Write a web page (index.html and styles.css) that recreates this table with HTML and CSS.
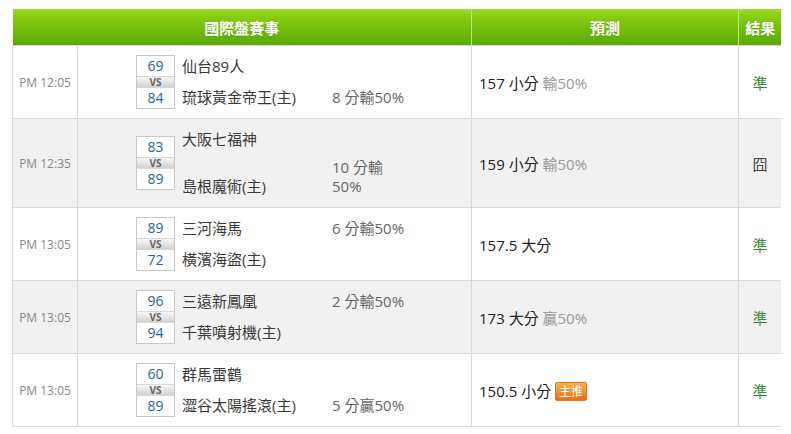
FILE: index.html
```html
<!DOCTYPE html>
<html lang="zh-Hant">
<head>
    <meta charset="UTF-8">
    <title>國際盤賽事</title>
    <link rel="stylesheet" href="styles.css">
</head>
<body>

    <table class="games">
        <colgroup>
            <col class="c-time">
            <col class="c-match">
            <col class="c-pred">
            <col class="c-res">
        </colgroup>
        <thead>
            <tr>
                <th colspan="2">國際盤賽事</th>
                <th>預測</th>
                <th>結果</th>
            </tr>
        </thead>
        <tbody>
            <!-- row 1 -->
            <tr>
                <td class="time">PM 12:05</td>
                <td class="match">
                    <div class="match-wrap">
                        <div class="score">
                            <span class="num">69</span>
                            <span class="vs">VS</span>
                            <span class="num">84</span>
                        </div>
                        <div class="teams">
                            <span class="team">仙台89人</span>
                            <span class="hcp"></span>
                            <span class="team bottom">琉球黃金帝王(主)</span>
                            <span class="hcp bottom">8 分輸50%</span>
                        </div>
                    </div>
                </td>
                <td class="pred">157 小分 <span class="odds">輸50%</span></td>
                <td class="res ok">準</td>
            </tr>

            <!-- row 2 -->
            <tr class="alt">
                <td class="time">PM 12:35</td>
                <td class="match">
                    <div class="match-wrap">
                        <div class="score">
                            <span class="num">83</span>
                            <span class="vs">VS</span>
                            <span class="num">89</span>
                        </div>
                        <div class="teams">
                            <span class="team">大阪七福神</span>
                            <span class="hcp"></span>
                            <span class="team bottom">島根魔術(主)</span>
                            <span class="hcp bottom wrap">10 分輸 50%</span>
                        </div>
                    </div>
                </td>
                <td class="pred">159 小分 <span class="odds">輸50%</span></td>
                <td class="res">囧</td>
            </tr>

            <!-- row 3 -->
            <tr>
                <td class="time">PM 13:05</td>
                <td class="match">
                    <div class="match-wrap">
                        <div class="score">
                            <span class="num">89</span>
                            <span class="vs">VS</span>
                            <span class="num">72</span>
                        </div>
                        <div class="teams">
                            <span class="team">三河海馬</span>
                            <span class="hcp">6 分輸50%</span>
                            <span class="team bottom">橫濱海盜(主)</span>
                            <span class="hcp bottom"></span>
                        </div>
                    </div>
                </td>
                <td class="pred">157.5 大分</td>
                <td class="res ok">準</td>
            </tr>

            <!-- row 4 -->
            <tr class="alt">
                <td class="time">PM 13:05</td>
                <td class="match">
                    <div class="match-wrap">
                        <div class="score">
                            <span class="num">96</span>
                            <span class="vs">VS</span>
                            <span class="num">94</span>
                        </div>
                        <div class="teams">
                            <span class="team">三遠新鳳凰</span>
                            <span class="hcp">2 分輸50%</span>
                            <span class="team bottom">千葉噴射機(主)</span>
                            <span class="hcp bottom"></span>
                        </div>
                    </div>
                </td>
                <td class="pred">173 大分 <span class="odds">贏50%</span></td>
                <td class="res ok">準</td>
            </tr>

            <!-- row 5 -->
            <tr>
                <td class="time">PM 13:05</td>
                <td class="match">
                    <div class="match-wrap">
                        <div class="score">
                            <span class="num">60</span>
                            <span class="vs">VS</span>
                            <span class="num">89</span>
                        </div>
                        <div class="teams">
                            <span class="team">群馬雷鶴</span>
                            <span class="hcp"></span>
                            <span class="team bottom">澀谷太陽搖滾(主)</span>
                            <span class="hcp bottom">5 分贏50%</span>
                        </div>
                    </div>
                </td>
                <td class="pred">150.5 小分 <span class="badge">主推</span></td>
                <td class="res ok">準</td>
            </tr>
        </tbody>
    </table>

</body>
</html>
```

FILE: styles.css
```css
/* General */
body {
    margin: 9px 10px 0 12px;
    font-family: "Open Sans", "Noto Sans CJK TC", sans-serif;
    font-size: 15px;
    color: #333;
    background: #fff;
}

/* Table */
.games {
    width: 769px;
    border-collapse: collapse;
    table-layout: fixed;
}

.c-time { width: 65px; }
.c-match { width: 394px; }
.c-pred { width: 267px; }
.c-res { width: 43px; }

.games th {
    height: 36px;
    padding: 0;
    background: linear-gradient(180deg, #9ddc2a, #8ccf14 15%, #5aaa04);
    color: #fff;
    font-size: 15px;
    font-weight: bold;
    border-left: 1px solid #b8ec6e;
    text-shadow: 0 1px 1px rgba(0, 0, 0, 0.15);
}

.games th:first-child { border-left: none; }

.games td {
    border: 1px solid #dadada;
    padding: 0;
}

.games tbody tr { height: 73px; }
.games tr.alt td { background: #f1f1f1; }

/* Time column */
.time {
    text-align: center;
    color: #888;
    font-size: 12px;
}

/* Match column */
.match { padding: 5px 0 !important; }

.match-wrap {
    display: flex;
    align-items: center;
    padding-left: 58px;
}

.score {
    flex: 0 0 37px;
    border: 1px solid #c9c9c9;
    display: flex;
    flex-direction: column;
    text-align: center;
    background: #fff;
}

.score .num {
    height: 20px;
    line-height: 20px;
    color: #2e6496;
    font-size: 14px;
}

.score .vs {
    height: 10px;
    line-height: 10px;
    font-size: 10px;
    font-weight: bold;
    color: #666;
    background: linear-gradient(180deg, #f7f7f7, #d2d2d2);
    border-top: 1px solid #d8d8d8;
    border-bottom: 1px solid #d8d8d8;
}

.teams {
    display: grid;
    grid-template-columns: 150px 80px;
    margin-left: 7px;
    line-height: 19px;
}

.teams span { padding: 6px 0; }
.teams .bottom { align-self: end; }
.teams .wrap { padding-top: 3px; width: 64px; }

.team { color: #3a3a3a; }
.hcp { color: #666; }

/* Prediction column */
.pred {
    padding-left: 7px !important;
    color: #222;
}

.odds { color: #999; }

.badge {
    display: inline-block;
    padding: 0 3px;
    line-height: 17px;
    font-size: 12px;
    color: #fff;
    border-radius: 2px;
    border: 1px solid #e2741f;
    background: linear-gradient(180deg, #fbb24a, #ec6a19);
    vertical-align: 1px;
}

/* Result column */
.res {
    text-align: center;
    color: #444;
}

.res.ok { color: #3a8a3e; }
```
